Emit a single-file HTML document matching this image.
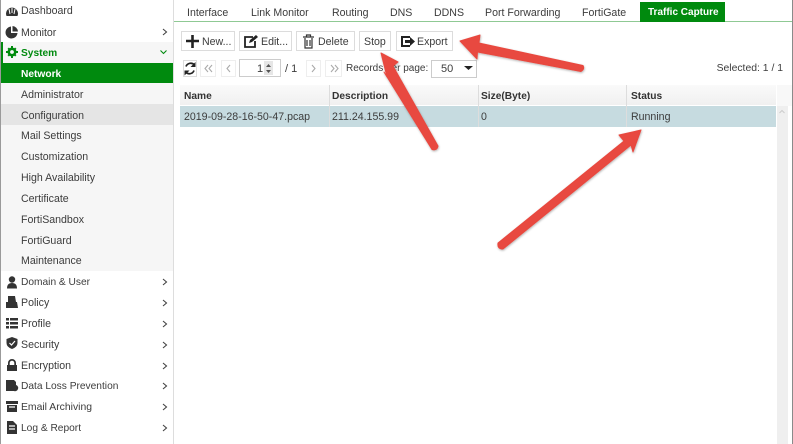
<!DOCTYPE html>
<html><head><meta charset="utf-8"><style>
html,body{margin:0;padding:0;background:#fff}
#p{position:relative;width:793px;height:444px;overflow:hidden;background:#fff;font:10.6px "Liberation Sans",sans-serif;color:#3c3c3c}
#p div{position:absolute;box-sizing:border-box}
.t{white-space:nowrap;line-height:14px}
.m{left:21px}
.b{border:1px solid #dcdcdc;background:#fff;height:20px;top:31px}
.h{font-weight:bold;color:#333;top:90px;font-size:10.2px}
.c{top:110px}
.l{width:1px;background:#ddd;top:85px;height:42px}
.tab{top:6px}
svg{position:absolute;overflow:visible}
</style></head><body><div id="p">
<div style="left:0;top:0;width:1px;height:444px;background:#9a9a9a"></div>
<div style="left:173px;top:0;width:1px;height:444px;background:#ddd"></div>
<div style="left:1px;top:42px;width:172px;height:21px;background:#f6f6f6"></div>
<div style="left:1px;top:42px;width:2px;height:21px;background:#008a0e"></div>
<div style="left:1px;top:63px;width:172px;height:208px;background:#f6f6f6"></div>
<div style="left:1px;top:63px;width:172px;height:20px;background:#008a0e"></div>
<div style="left:1px;top:104px;width:172px;height:21px;background:#e5e5e5"></div>
<div class="t m" style="top:4px">Dashboard</div>
<div class="t m" style="top:26px">Monitor</div>
<div class="t m" style="top:47px;color:#008a0e;font-weight:bold;font-size:10.2px">System</div>
<div class="t m" style="top:68px;color:#fff;font-weight:bold;font-size:10.2px">Network</div>
<div class="t m" style="top:88px">Administrator</div>
<div class="t m" style="top:109px">Configuration</div>
<div class="t m" style="top:129px">Mail Settings</div>
<div class="t m" style="top:150px">Customization</div>
<div class="t m" style="top:171px">High Availability</div>
<div class="t m" style="top:192px">Certificate</div>
<div class="t m" style="top:213px">FortiSandbox</div>
<div class="t m" style="top:234px">FortiGuard</div>
<div class="t m" style="top:254px">Maintenance</div>
<div class="t m" style="top:276px;font-size:10.2px">Domain &amp; User</div>
<div class="t m" style="top:296px">Policy</div>
<div class="t m" style="top:317px">Profile</div>
<div class="t m" style="top:338px">Security</div>
<div class="t m" style="top:359px">Encryption</div>
<div class="t m" style="top:380px;font-size:10.2px">Data Loss Prevention</div>
<div class="t m" style="top:401px;font-size:10.4px">Email Archiving</div>
<div class="t m" style="top:422px;font-size:10.2px">Log &amp; Report</div>

<svg style="left:0;top:0" width="174" height="444" viewBox="0 0 174 444">
<g fill="none" stroke="#444" stroke-width="1.100">
<path d="M163 29l3.500 3-3.500 3M163 279l3.500 3-3.500 3M163 300l3.500 3-3.500 3M163 321l3.500 3-3.500 3M163 342l3.500 3-3.500 3M163 363l3.500 3-3.500 3M163 383l3.500 3-3.500 3M163 404l3.500 3-3.500 3M163 425l3.500 3-3.500 3"/>
<path d="M160.500 50.500l3 3 3-3" stroke="#008a0e"/>
</g>
<g fill="#333">
<path d="M6.500 16a6 6 0 1 1 11 0z"/>
<path d="M11 26.500a6 6 0 1 0 6.500 6.500H11z"/><path d="M12.500 26a6 6 0 0 1 5.500 5.500h-5.500z"/>
<circle cx="12" cy="279.500" r="3.200"/><path d="M7 288.500q0-5.500 5-5.500t5 5.500z"/>
<path d="M8 296h7l1 6h1l1 6H6v-6h2z"/>
<path d="M6 318h3v2.500H6zM10 318h8v2.500h-8zM6 322h3v2.500H6zM10 322h8v2.500h-8zM6 326h3v2.500H6zM10 326h8v2.500h-8z"/>
<path d="M12 337l5.500 2v4q0 4-5.500 6q-5.500-2-5.500-6v-4z"/>
<path d="M8 365v-2a4 4 0 0 1 8 0v2h1v6H7v-6zM9.700 365h4.600v-2a2.300 2.300 0 0 0-4.600 0z" fill-rule="evenodd"/>
<path d="M6 380h8l2 2v4h-2v5H6z"/>
<circle cx="15" cy="388" r="3.200"/>
<path d="M6 401h12v3H6zM7 405h10v7H7z"/>
<path d="M7 421h6l4 4v9H7z"/>
<g fill="#008a0e"><circle cx="12" cy="52" r="4.500"/><path d="M11 46h2v12h-2zM6 51h12v2H6zM7.500 48.900l1.400-1.400 7.600 7.600-1.400 1.400zM15.100 47.500l1.400 1.400-7.600 7.600-1.400-1.400z"/></g>
</g>
<circle cx="12" cy="52" r="1.900" fill="#f6f6f6"/>
<path d="M9 9l1 5M12 8v5M15 9l-1 5" stroke="#fff" fill="none"/>
<path d="M9.500 343l2 2 3.500-4M9 407h6M9 426h6M9 429h6" stroke="#fff" fill="none" stroke-width="1.200"/>
</svg>

<div style="left:174px;top:21px;width:619px;height:1px;background:#8fc994"></div>
<div class="t tab" style="left:187px">Interface</div>
<div class="t tab" style="left:251px">Link Monitor</div>
<div class="t tab" style="left:332px">Routing</div>
<div class="t tab" style="left:390px">DNS</div>
<div class="t tab" style="left:434px">DDNS</div>
<div class="t tab" style="left:485px">Port Forwarding</div>
<div class="t tab" style="left:582px">FortiGate</div>
<div style="left:640px;top:2px;width:85px;height:20px;background:#008a0e"></div>
<div class="t tab" style="left:648px;top:6px;color:#fff;font-weight:bold;font-size:10px">Traffic Capture</div>

<div class="b" style="left:181px;width:54px"></div>
<div class="b" style="left:239px;width:53px"></div>
<div class="b" style="left:296px;width:59px"></div>
<div class="b" style="left:359px;width:32px"></div>
<div class="b" style="left:396px;width:57px"></div>
<div class="t" style="left:202px;top:35px">New...</div>
<div class="t" style="left:261px;top:35px">Edit...</div>
<div class="t" style="left:318px;top:35px">Delete</div>
<div class="t" style="left:364px;top:35px">Stop</div>
<div class="t" style="left:417px;top:35px">Export</div>

<div class="b" style="left:183px;top:60px;width:14px;height:17px"></div>
<div class="b" style="left:200px;top:60px;width:16px;height:17px;border-color:#eee"></div>
<div class="b" style="left:221px;top:60px;width:15px;height:17px;border-color:#eee"></div>
<div class="b" style="left:306px;top:60px;width:15px;height:17px;border-color:#eee"></div>
<div class="b" style="left:325px;top:60px;width:17px;height:17px;border-color:#eee"></div>
<div class="b" style="left:239px;top:59px;width:42px;height:18px;border-color:#ccc;background:#fff"></div>
<div style="left:264px;top:61px;width:9px;height:14px;background:#e6e6e6"></div>
<div class="t" style="left:257px;top:62px;font-size:11px">1</div>
<div class="t" style="left:285px;top:62px;font-size:11px">/ 1</div>
<div class="t" style="left:346px;top:62px;font-size:10px">Records per page:</div>
<div class="b" style="left:431px;top:60px;width:46px;height:18px;background:transparent;border-color:#ccc"></div>
<div class="t" style="left:441px;top:62px;font-size:11px">50</div>
<div class="t" style="right:10px;top:62px;font-size:10.4px">Selected: 1 / 1</div>

<svg style="left:0;top:0" width="793" height="444" viewBox="0 0 793 444">
<path d="M186 41h13M192.500 35v13" stroke="#222" stroke-width="2.600" fill="none"/>
<path d="M253 37h-8v10h10v-6" stroke="#222" stroke-width="1.800" fill="none"/>
<path d="M249 43l1-3 6-5 2 2-6 5z" fill="#222"/>
<path d="M303 37h11M305 38v10h7v-10M307 40v6M310 40v6M306.500 37v-2h4v2" stroke="#333" stroke-width="1.200" fill="none"/>
<path d="M410 37h-8v9h8" stroke="#222" stroke-width="2" fill="none"/>
<path d="M405 40h5v-3l5 4.500-5 4.500v-3h-5z" fill="#222"/>
<path d="M194.500 65a5 5 0 0 0-8.500 1.500M185.500 72a5 5 0 0 0 8.500-1.500" stroke="#222" stroke-width="1.700" fill="none"/>
<path d="M195.500 62v5h-5zM184.500 75.500v-5h5z" fill="#222"/>
<path d="M208 65l-3 3.500 3 3.500M212 65l-3 3.500 3 3.500M230 65l-3 3.500 3 3.500M312 65l3 3.500-3 3.500M331 65l3 3.500-3 3.500M335 65l3 3.500-3 3.500" stroke="#aaa" fill="none" stroke-width="1.100"/>
<path d="M266 67l2.500-3 2.500 3zM266 70l2.500 3 2.500-3z" fill="#555"/>
<path d="M464 66h9l-4.500 4z" fill="#222"/>
</svg>

<div style="left:180px;top:85px;width:596px;height:20px;background:linear-gradient(#fafafa,#f0f0f0)"></div>
<div style="left:180px;top:106px;width:596px;height:21px;background:#c6dbe0"></div>
<div class="l" style="left:329px"></div>
<div class="l" style="left:478px"></div>
<div class="l" style="left:626px"></div>
<div class="t h" style="left:184px">Name</div>
<div class="t h" style="left:332px">Description</div>
<div class="t h" style="left:481px">Size(Byte)</div>
<div class="t h" style="left:631px">Status</div>
<div class="t c" style="left:184px">2019-09-28-16-50-47.pcap</div>
<div class="t c" style="left:332px">211.24.155.99</div>
<div class="t c" style="left:481px">0</div>
<div class="t c" style="left:631px">Running</div>

<div style="left:777px;top:106px;width:11px;height:338px;background:#efefef"></div>
<div style="left:777px;top:85px;width:16px;height:21px;background:#f8f8f8"></div>
<div style="left:792px;top:0;width:1px;height:444px;background:#8a8a8a"></div>
<svg style="left:0;top:0" width="793" height="444" viewBox="0 0 793 444">
<path d="M779.500 113l2.500-2.500 2.500 2.500" stroke="#ccc" fill="none"/>
<defs><filter id="s" x="-20%" y="-20%" width="140%" height="140%"><feDropShadow dx="0.500" dy="1" stdDeviation="1" flood-color="#000" flood-opacity=".3"/></filter></defs>
<g fill="#e8483f" stroke="#e8483f" stroke-width="1" stroke-linejoin="round" filter="url(#s)">
<path d="M460 41L480 35 479 43 583 65.500Q585 69 581 71.500L477.500 52 477 59z"/>
<path d="M381 53L398 62 393 66 438 146Q437 151 432 149.500L384 72 387 77z"/>
<path d="M641 130L619 135 624 141 498 243Q497 249 503 249L631 145 633 152z"/>
</g>
</svg>
</div></body></html>
